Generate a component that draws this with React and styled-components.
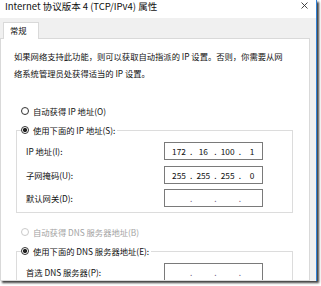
import React from 'react'
import styled, {createGlobalStyle} from 'styled-components'

const GlobalStyle = createGlobalStyle`
html, body {
  margin: 0;
  padding: 0;
  background: #ffffff;
  overflow: hidden;
}
* {
  box-sizing: border-box;
}
`

const Page = styled.div`
width: 321px;
height: 286px;
overflow: hidden;
font-family: "Noto Sans CJK SC", "Noto Sans", sans-serif;
font-size: 8.3px;
color: #111;
`
const Window = styled.div`
width: 317px;
height: 281px;
display: flex;
flex-direction: column;
background: #f0f0f0;
border-right: 1px solid #2f80d6;
box-shadow: 2px 2px 2px rgba(0, 0, 0, 0.75);
overflow: hidden;
`
const TitleBar = styled.div`
height: 18px;
flex: none;
display: flex;
justify-content: space-between;
align-items: flex-start;
background: #ffffff;
padding: 0 8px 0 5px;
font-size: 9.5px;
line-height: 12px;
white-space: nowrap;
`
const CloseIcon = styled.svg`
width: 7px;
height: 7px;
margin-top: 2px;
`
const Body = styled.div`
flex: 1;
display: flex;
flex-direction: column;
padding: 4px 6px 0 0;
min-height: 0;
`
const TabStrip = styled.div`
display: flex;
flex: none;
`
const Tab = styled.div`
position: relative;
z-index: 1;
margin-left: 3px;
margin-bottom: -1px;
width: 36px;
height: 17px;
padding-left: 6px;
line-height: 15px;
background: #ffffff;
border: 1px solid #d9d9d9;
border-bottom: none;
`
const Panel = styled.div`
flex: 1;
min-height: 0;
background: #ffffff;
border: 1px solid #d9d9d9;
padding: 9px 8px 0 0;
overflow: hidden;
`
const Intro = styled.p`
margin: 0 0 0 13px;
line-height: 17px;
white-space: nowrap;
`
const RadioRow = styled.div`
display: flex;
align-items: center;
height: 19px;
margin: ${p => p.$top || 0}px 0 0 ${p => p.$left || 0}px;
white-space: nowrap;
color: ${p => p.$disabled ? '#a3a3a3' : '#111'};
`
const RadioDot = styled.span`
width: 8px;
height: 8px;
flex: none;
margin-right: 4px;
border-radius: 50%;
border: 1px solid ${p => p.$disabled ? '#cacaca' : '#333'};
background: ${p => p.$checked
  ? 'radial-gradient(circle, #222 0, #222 1.9px, #fff 2.3px)'
  : '#fff'};
`
const Group = styled.fieldset`
margin: 0 8px 0 15px;
padding: 2.5px 0 5px 4px;
min-width: 0;
border: 1px solid #dcdcdc;
`
const Legend = styled.legend`
padding: 0 2px 0 0;
`
const FieldRow = styled.div`
display: flex;
align-items: center;
height: 18px;
padding-left: 5px;
white-space: nowrap;
& + & {
  margin-top: 5.5px;
}
`
const FieldLabel = styled.span`
width: 138px;
flex: none;
`
const IpBox = styled.div`
width: 99px;
height: 18px;
flex: none;
display: flex;
align-items: center;
padding-left: 4px;
border: 1px solid #7a7a7a;
background: #ffffff;
`
const Octet = styled.span`
width: 20px;
text-align: center;
`
const Dot = styled.span`
width: 4.5px;
text-align: center;
color: ${p => p.$empty ? '#7a6a8a' : '#111'};
`

function Radio({checked, disabled, children, top, left}) {
  return (
    <RadioRow $disabled={disabled} $top={top} $left={left}>
      <RadioDot $checked={checked} $disabled={disabled}/>
      {children}
    </RadioRow>
  )
}

function IpField({value}) {
  const parts = value ? value.split('.') : ['', '', '', '']
  return (
    <IpBox>
      {parts.map((p, i) => (
        <React.Fragment key={i}>
          <Octet>{p}</Octet>
          {i < 3 && <Dot $empty={!value}>.</Dot>}
        </React.Fragment>
      ))}
    </IpBox>
  )
}

export default function App() {
  return (
    <Page>
      <GlobalStyle/>
      <Window>
        <TitleBar>
          <span>Internet 协议版本 4 (TCP/IPv4) 属性</span>
          <CloseIcon viewBox="0 0 7 7">
            <path d="M0.5 0.5 L6.5 6.5 M6.5 0.5 L0.5 6.5" stroke="#333" strokeWidth="0.9" fill="none"/>
          </CloseIcon>
        </TitleBar>
        <Body>
          <TabStrip>
            <Tab>常规</Tab>
          </TabStrip>
          <Panel>
            <Intro>
              如果网络支持此功能，则可以获取自动指派的 IP 设置。否则，你需要从网<br/>
              络系统管理员处获得适当的 IP 设置。
            </Intro>

            <Radio top={19.5} left={20}>自动获得 IP 地址(O)</Radio>
            <Group>
              <Legend>
                <Radio checked>使用下面的 IP 地址(S):</Radio>
              </Legend>
              <FieldRow>
                <FieldLabel>IP 地址(I):</FieldLabel>
                <IpField value="172.16.100.1"/>
              </FieldRow>
              <FieldRow>
                <FieldLabel>子网掩码(U):</FieldLabel>
                <IpField value="255.255.255.0"/>
              </FieldRow>
              <FieldRow>
                <FieldLabel>默认网关(D):</FieldLabel>
                <IpField/>
              </FieldRow>
            </Group>

            <Radio disabled top={9.5} left={20}>自动获得 DNS 服务器地址(B)</Radio>
            <Group>
              <Legend>
                <Radio checked>使用下面的 DNS 服务器地址(E):</Radio>
              </Legend>
              <FieldRow>
                <FieldLabel>首选 DNS 服务器(P):</FieldLabel>
                <IpField/>
              </FieldRow>
            </Group>
          </Panel>
        </Body>
      </Window>
    </Page>
  )
}
